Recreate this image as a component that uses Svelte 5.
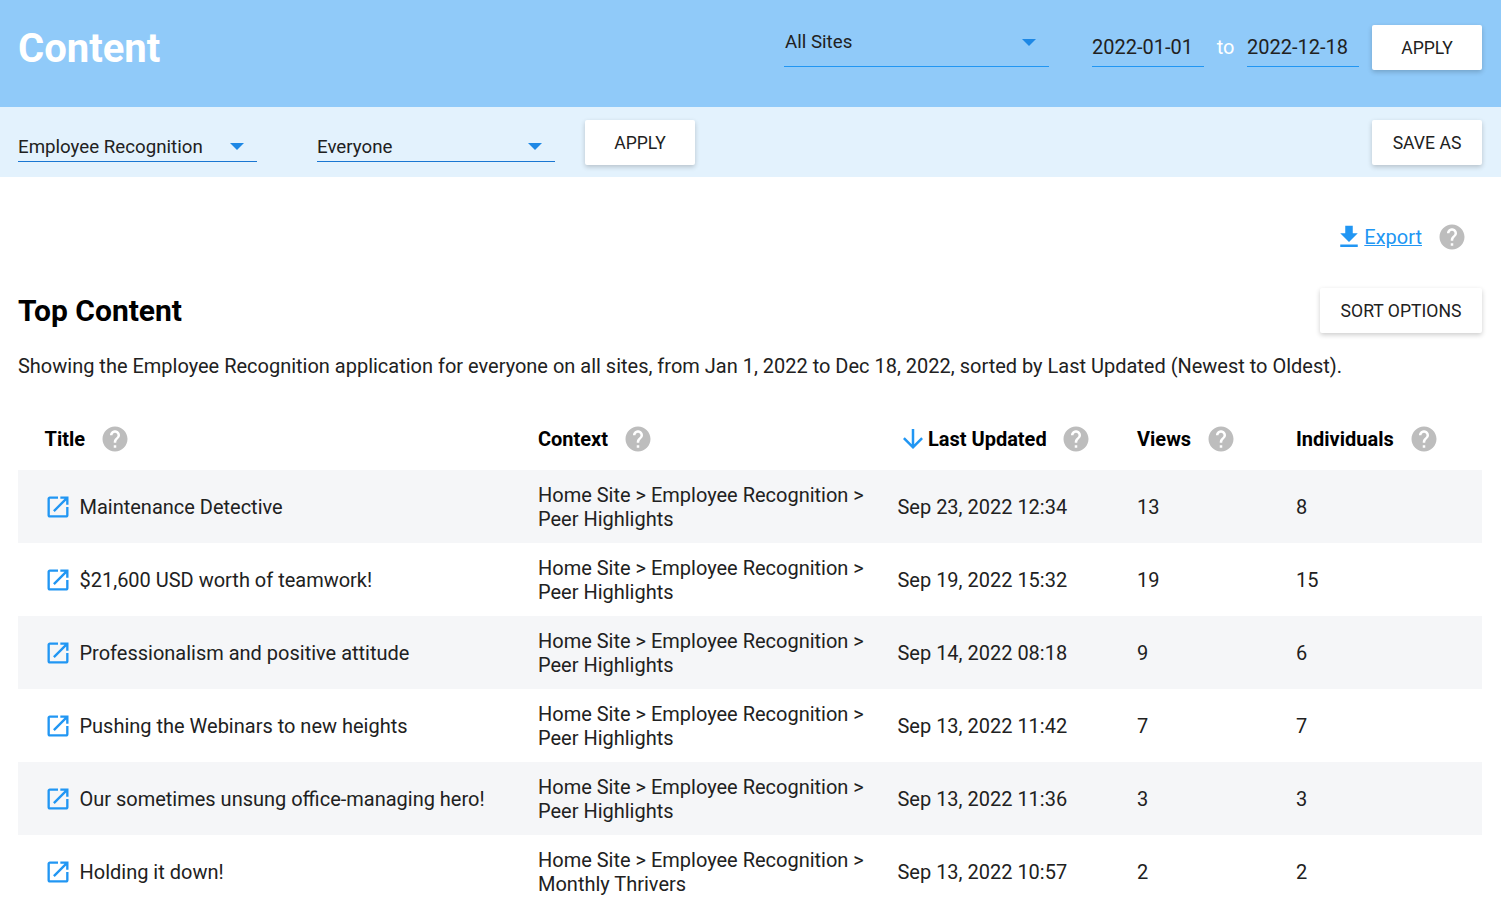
<script>
	const helpPath =
		"M12 2C6.48 2 2 6.48 2 12s4.48 10 10 10 10-4.48 10-10S17.52 2 12 2zm1 17h-2v-2h2v2zm2.07-7.75l-.9.92C13.45 12.9 13 13.5 13 15h-2v-.5c0-1.1.45-2.1 1.17-2.83l1.24-1.26c.37-.36.59-.86.59-1.41 0-1.1-.9-2-2-2s-2 .9-2 2H8c0-2.21 1.79-4 4-4s4 1.79 4 4c0 .88-.36 1.68-.93 2.25z";

	const rows = [
		{ title: "Maintenance Detective", page: "Peer Highlights", date: "Sep 23, 2022 12:34", views: 13, people: 8 },
		{ title: "$21,600 USD worth of teamwork!", page: "Peer Highlights", date: "Sep 19, 2022 15:32", views: 19, people: 15 },
		{ title: "Professionalism and positive attitude", page: "Peer Highlights", date: "Sep 14, 2022 08:18", views: 9, people: 6 },
		{ title: "Pushing the Webinars to new heights", page: "Peer Highlights", date: "Sep 13, 2022 11:42", views: 7, people: 7 },
		{ title: "Our sometimes unsung office-managing hero!", page: "Peer Highlights", date: "Sep 13, 2022 11:36", views: 3, people: 3 },
		{ title: "Holding it down!", page: "Monthly Thrivers", date: "Sep 13, 2022 10:57", views: 2, people: 2 }
	];
</script>

{#snippet help()}
	<svg class="help" viewBox="0 0 24 24"><path d={helpPath} /></svg>
{/snippet}

{#snippet caret()}
	<span class="caret"></span>
{/snippet}

<div class="page">
	<header class="top">
		<h1>Content</h1>
		<div class="select sites"><span>All Sites</span>{@render caret()}</div>
		<div class="date">2022-01-01</div>
		<span class="to">to</span>
		<div class="date">2022-12-18</div>
		<button>APPLY</button>
	</header>

	<div class="filters">
		<div class="select app"><span>Employee Recognition</span>{@render caret()}</div>
		<div class="select audience"><span>Everyone</span>{@render caret()}</div>
		<button>APPLY</button>
		<button class="save">SAVE AS</button>
	</div>

	<main>
		<div class="export">
			<!-- svelte-ignore a11y_invalid_attribute -->
			<a href="#">
				<svg viewBox="0 0 24 24"><path d="M19 9h-4V3H9v6H5l7 7 7-7zM5 18v2h14v-2H5z" /></svg>
				<span>Export</span>
			</a>
			{@render help()}
		</div>

		<div class="heading">
			<h2>Top Content</h2>
			<button>SORT OPTIONS</button>
		</div>
		<p class="summary">
			Showing the Employee Recognition application for everyone on all sites, from Jan 1, 2022 to Dec 18, 2022, sorted by Last Updated (Newest to Oldest).
		</p>

		<div class="table">
			<div class="row head">
				<div class="cell first"><b>Title</b>{@render help()}</div>
				<div class="cell"><b>Context</b>{@render help()}</div>
				<div class="cell updated">
					<svg class="arrow" viewBox="0 0 24 24"><path d="M20 12l-1.41-1.41L13 16.17V4h-2v12.17l-5.58-5.59L4 12l8 8 8-8z" /></svg>
					<b>Last Updated</b>{@render help()}
				</div>
				<div class="cell"><b>Views</b>{@render help()}</div>
				<div class="cell"><b>Individuals</b>{@render help()}</div>
			</div>
			{#each rows as row}
				<div class="row item">
					<div class="cell first">
						<svg class="open" viewBox="0 0 24 24"><path d="M19 19H5V5h7V3H5c-1.11 0-2 .9-2 2v14c0 1.1.89 2 2 2h14c1.1 0 2-.9 2-2v-7h-2v7zM14 3v2h3.59l-9.83 9.83 1.41 1.41L19 6.41V10h2V3h-7z" /></svg>
						<span>{row.title}</span>
					</div>
					<div class="cell context">Home Site &gt; Employee Recognition &gt;<br />{row.page}</div>
					<div class="cell date-cell">{row.date}</div>
					<div class="cell">{row.views}</div>
					<div class="cell">{row.people}</div>
				</div>
			{/each}
		</div>
	</main>
</div>

<style>
	:global(body) {
		margin: 0;
		font-family: Roboto, sans-serif;
		font-size: 19.99px;
		color: #111;
		background: #fff;
		overflow: hidden;
	}

	.page {
		height: 901px;
		overflow: hidden;
	}

	button {
		width: 110px;
		height: 45px;
		padding: 0;
		border: none;
		border-radius: 2px;
		background: #fff;
		color: #212121;
		font: 400 17.6px Roboto, sans-serif;
		box-shadow: 0 2px 5px rgba(0, 0, 0, 0.2);
	}

	.top {
		display: flex;
		align-items: center;
		height: 107px;
		box-sizing: border-box;
		padding: 0 19px 12px 18px;
		background: #90caf9;
	}

	h1 {
		margin: 2px auto 0 0;
		color: #fff;
		font-size: 40px;
		font-weight: 700;
	}

	.select {
		display: flex;
		align-items: center;
		justify-content: space-between;
		box-sizing: border-box;
		border-bottom: 1px solid #2196f3;
		color: #212121;
		font-size: 18.72px;
	}

	.caret {
		width: 0;
		height: 0;
		border-left: 7px solid transparent;
		border-right: 7px solid transparent;
		border-top: 7px solid #1e88e5;
	}

	.sites {
		width: 265px;
		height: 49px;
		margin-right: 43px;
		padding: 13px 13px 0 1px;
		align-items: flex-start;
		align-self: flex-end;
		margin-bottom: 28px;
	}

	.sites .caret {
		margin-top: 8px;
	}

	.date {
		width: 112px;
		box-sizing: border-box;
		height: 38px;
		line-height: 36px;
		border-bottom: 1px solid #2196f3;
		align-self: flex-end;
		margin-bottom: 28px;
		color: #212121;
	}

	.to {
		width: 43px;
		margin-bottom: 2px;
		text-align: center;
		color: #fff;
	}

	.top button {
		margin-left: 13px;
	}

	.filters {
		display: flex;
		align-items: center;
		height: 70px;
		box-sizing: border-box;
		padding: 0 19px 0 18px;
		background: #e3f2fd;
	}

	.filters button {
		padding-top: 1px;
	}

	.app,
	.audience {
		height: 33px;
		padding-top: 3px;
		align-self: flex-start;
		margin-top: 22px;
		border-bottom-color: #1976d2;
	}

	.app {
		width: 239px;
		margin-right: 60px;
		padding-right: 13px;
	}

	.audience {
		width: 238px;
		margin-right: 30px;
		padding-right: 13px;
	}

	.save {
		margin-left: auto;
	}

	main {
		padding: 0 19px 0 18px;
	}

	.export {
		display: flex;
		align-items: center;
		justify-content: flex-end;
		gap: 15px;
		height: 30px;
		padding: 45px 15px 0 0;
	}

	.export a {
		display: flex;
		align-items: center;
		color: #2196f3;
	}

	.export a svg {
		width: 30px;
		height: 30px;
		fill: #2196f3;
	}

	.help {
		flex: none;
		width: 30px;
		height: 30px;
		fill: #bdbdbd;
	}

	.heading {
		display: flex;
		align-items: center;
		justify-content: space-between;
		margin-top: 36px;
	}

	h2 {
		margin: 0;
		font-size: 30px;
		font-weight: 700;
		color: #000;
	}

	.heading button {
		width: 162px;
	}

	.summary {
		margin: 21px 0 0;
		line-height: 24px;
		color: #212121;
	}

	.table {
		margin-top: 30px;
	}

	.row {
		display: grid;
		grid-template-columns: 520px 359px 240px 159px 186px;
		align-items: center;
	}

	.head {
		height: 62px;
	}

	.item {
		height: 73px;
	}

	.item:nth-child(even) {
		background: #f5f6f8;
	}

	.cell {
		display: flex;
		align-items: center;
		color: #212121;
	}

	.head .cell {
		gap: 15px;
	}

	b {
		font-weight: 700;
		color: #000;
	}

	.first {
		padding-left: 26px;
	}

	.head .first {
		padding-left: 26.5px;
		gap: 14.5px;
	}

	.item .first {
		gap: 7.5px;
	}

	.context {
		display: block;
		line-height: 24px;
	}

	.date-cell {
		padding-left: 0.5px;
	}

	.head .updated {
		gap: 0;
		padding-left: 1px;
	}

	.updated b {
		margin-right: 14px;
	}

	.arrow {
		width: 30px;
		height: 30px;
		fill: #2196f3;
	}

	.open {
		flex: none;
		width: 28px;
		height: 28px;
		fill: #2196f3;
	}
</style>
